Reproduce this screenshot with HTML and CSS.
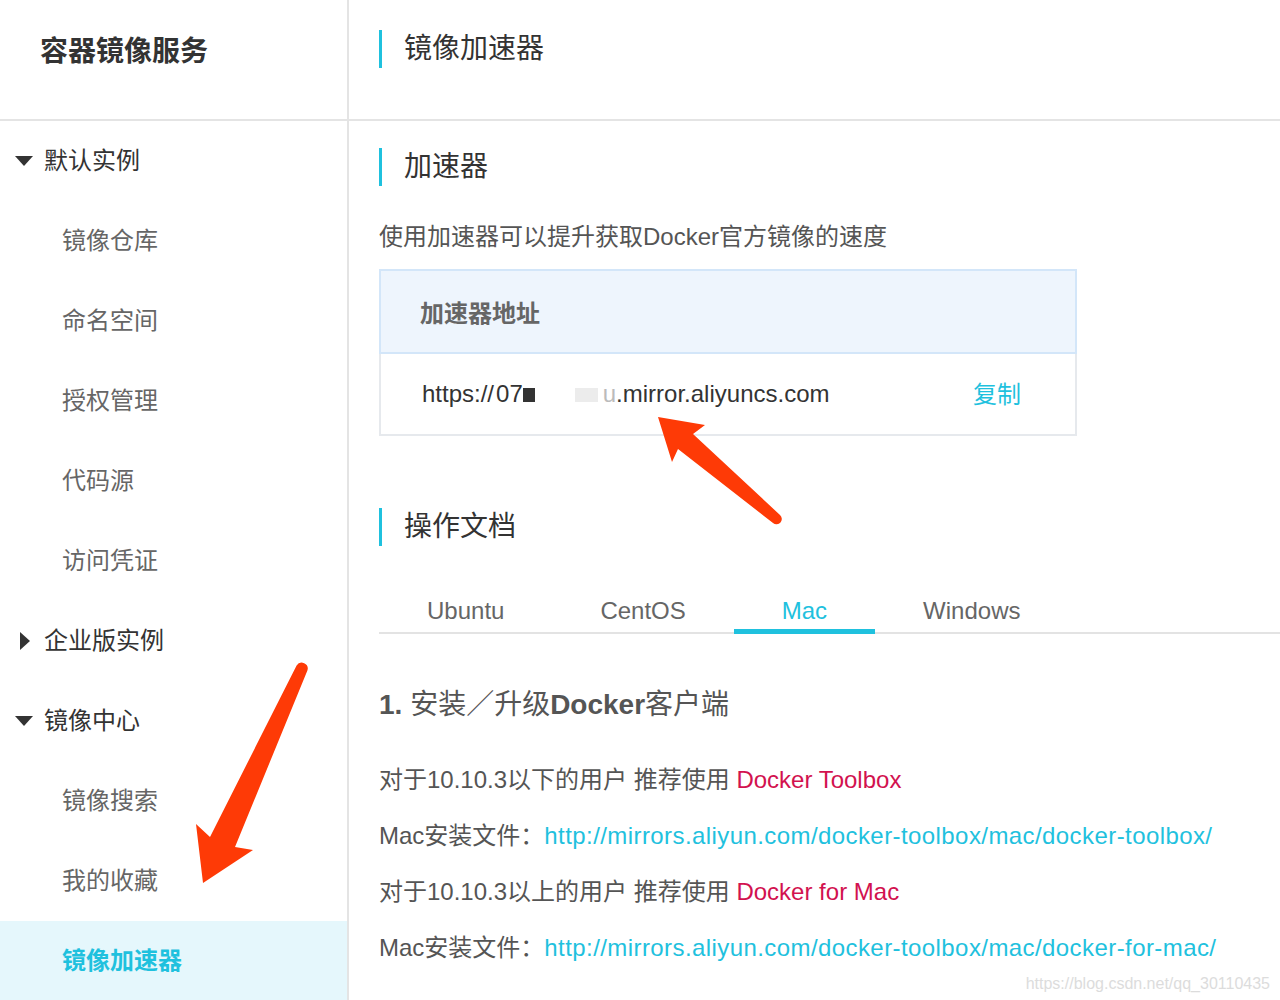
FILE: index.html
```html
<!DOCTYPE html>
<html lang="zh-CN">
<head>
<meta charset="utf-8">
<title>镜像加速器</title>
<link rel="stylesheet" href="styles.css">
</head>
<body>
<div class="page">
  <aside class="sidebar">
    <div class="brand">容器镜像服务</div>
    <nav class="menu">
      <div class="group"><span class="caret"><svg width="29" height="20" viewBox="0 0 29 20"><polygon points="0,5 18,5 9,15" fill="#333"/></svg></span>默认实例</div>
      <div class="item">镜像仓库</div>
      <div class="item">命名空间</div>
      <div class="item">授权管理</div>
      <div class="item">代码源</div>
      <div class="item">访问凭证</div>
      <div class="group"><span class="caret"><svg width="29" height="20" viewBox="0 0 29 20"><polygon points="5,1 15,10 5,19" fill="#333"/></svg></span>企业版实例</div>
      <div class="group"><span class="caret"><svg width="29" height="20" viewBox="0 0 29 20"><polygon points="0,5 18,5 9,15" fill="#333"/></svg></span>镜像中心</div>
      <div class="item">镜像搜索</div>
      <div class="item">我的收藏</div>
      <div class="item active">镜像加速器</div>
    </nav>
  </aside>
  <main class="main">
    <header class="main-head">
      <h1 class="sec-title">镜像加速器</h1>
    </header>
    <div class="content">
      <h2 class="sec-title first">加速器</h2>
      <p class="desc">使用加速器可以提升获取Docker官方镜像的速度</p>
      <div class="addr-box">
        <div class="addr-head">加速器地址</div>
        <div class="addr-body">
          <span class="url">https://<span class="m1">07</span><span class="m2"></span><span class="m3"></span><span class="m4">u</span>.mirror.aliyuncs.com</span>
          <a class="copy">复制</a>
        </div>
      </div>
      <h2 class="sec-title docs">操作文档</h2>
      <div class="tabs">
        <div class="tab">Ubuntu</div>
        <div class="tab">CentOS</div>
        <div class="tab active">Mac</div>
        <div class="tab">Windows</div>
      </div>
      <h3 class="step"><b>1.</b> 安装／升级<b>Docker</b>客户端</h3>
      <div class="lines">
        <p>对于10.10.3以下的用户 推荐使用 <a class="red">Docker Toolbox</a></p>
        <p>Mac安装文件：<a class="blue">http://mirrors.aliyun.com/docker-toolbox/mac/docker-toolbox/</a></p>
        <p>对于10.10.3以上的用户 推荐使用 <a class="red">Docker for Mac</a></p>
        <p>Mac安装文件：<a class="blue">http://mirrors.aliyun.com/docker-toolbox/mac/docker-for-mac/</a></p>
      </div>
    </div>
  </main>
  <svg class="arrows" width="1280" height="1000" viewBox="0 0 1280 1000">
    <path d="M658,417 L705,425 L693,434 L780,515 A5,5 0 0 1 773,523 L678,449 L672,462 Z" fill="#fe3a06"/>
    <path d="M203,883 L196,824 L210,837 L296.6,665.5 A6,6 0 0 1 307.4,670.5 L235,847 L253,850 Z" fill="#fe3a06"/>
  </svg>
  <div class="watermark">https://blog.csdn.net/qq_30110435</div>
</div>
</body>
</html>
```

FILE: styles.css
```css
* { box-sizing: border-box; }
html, body { margin: 0; padding: 0; background: #fff; }
body {
  font-family: "Liberation Sans", "Noto Sans CJK SC", sans-serif;
  color: #333;
}
.page {
  position: relative;
  display: flex;
  width: 1280px;
  height: 1000px;
  overflow: hidden;
}
.sidebar {
  width: 349px;
  flex: none;
  border-right: 2px solid #e4e4e4;
}
.brand {
  height: 121px;
  border-bottom: 2px solid #e4e4e4;
  padding: 32px 0 0 40px;
  font-size: 28px;
  line-height: 40px;
  font-weight: bold;
  color: #333;
}
.menu { display: flex; flex-direction: column; }
.group, .item {
  height: 80px;
  display: flex;
  align-items: center;
  padding-bottom: 6px;
  font-size: 24px;
}
.group { padding-left: 15px; color: #333; }
.caret { width: 29px; height: 20px; display: flex; margin-top: 5px; }
.item { padding-left: 62px; color: #666; }
.item.active {
  background: #e5f7fc;
  color: #1fc1de;
  font-weight: bold;
}
.main { flex: 1; min-width: 0; }
.main-head {
  height: 121px;
  border-bottom: 2px solid #e4e4e4;
  padding: 30px 0 0 30px;
}
.sec-title {
  margin: 0;
  height: 38px;
  line-height: 38px;
  border-left: 3px solid #1fc1de;
  padding-left: 22px;
  font-size: 28px;
  font-weight: normal;
  color: #333;
}
.content { padding-left: 30px; }
.sec-title.first { margin-top: 27px; }
.desc {
  margin: 35px 0 0;
  font-size: 24px;
  line-height: 32px;
  color: #555;
}
.addr-box {
  margin-top: 16px;
  width: 698px;
}
.addr-head {
  height: 85px;
  background: #eef5fd;
  border: 2px solid #d3e6f9;
  display: flex;
  align-items: center;
  padding-left: 39px;
  font-size: 24px;
  font-weight: bold;
  color: #666;
}
.addr-body {
  height: 82px;
  border: 2px solid #e6e9ed;
  border-top: none;
  display: flex;
  align-items: center;
  justify-content: space-between;
  padding: 0 54px 0 41px;
  font-size: 24px;
  color: #333;
}
.url { display: flex; align-items: baseline; white-space: pre; }
.m1 { color: #333; padding-left: 2px; }
.m2 {
  display: inline-block;
  width: 12px;
  height: 14px;
  background: #333;
  margin-right: 40px;
}
.m3 {
  display: inline-block;
  width: 23px;
  height: 14px;
  background: #ececec;
}
.m4 { color: #bbb; padding-left: 5px; }
.copy { color: #1fc1de; margin-top: -4px; }
.sec-title.docs { margin-top: 72px; }
.tabs {
  margin-top: 44px;
  display: flex;
  border-bottom: 2px solid #e3e3e3;
}
.tab {
  position: relative;
  padding: 0 48px;
  height: 42px;
  line-height: 42px;
  font-size: 24px;
  color: #666;
}
.tab.active { color: #1fc1de; }
.tab.active::after {
  content: "";
  position: absolute;
  left: 0;
  right: 0;
  bottom: -2px;
  height: 5px;
  background: #1fc1de;
}
.step {
  margin: 51px 0 0;
  font-size: 28px;
  line-height: 40px;
  font-weight: normal;
  color: #555;
}
.step b { font-weight: bold; }
.lines { margin-top: 27px; }
.lines p {
  margin: 0;
  font-size: 24px;
  line-height: 56px;
  color: #555;
  white-space: nowrap;
}
.red { color: #d2124f; }
.blue { color: #1fc1de; letter-spacing: 0.42px; }
.arrows {
  position: absolute;
  left: 0;
  top: 0;
  pointer-events: none;
}
.watermark {
  position: absolute;
  right: 10px;
  bottom: 7px;
  font-size: 16px;
  color: #dcdcdc;
}
```
